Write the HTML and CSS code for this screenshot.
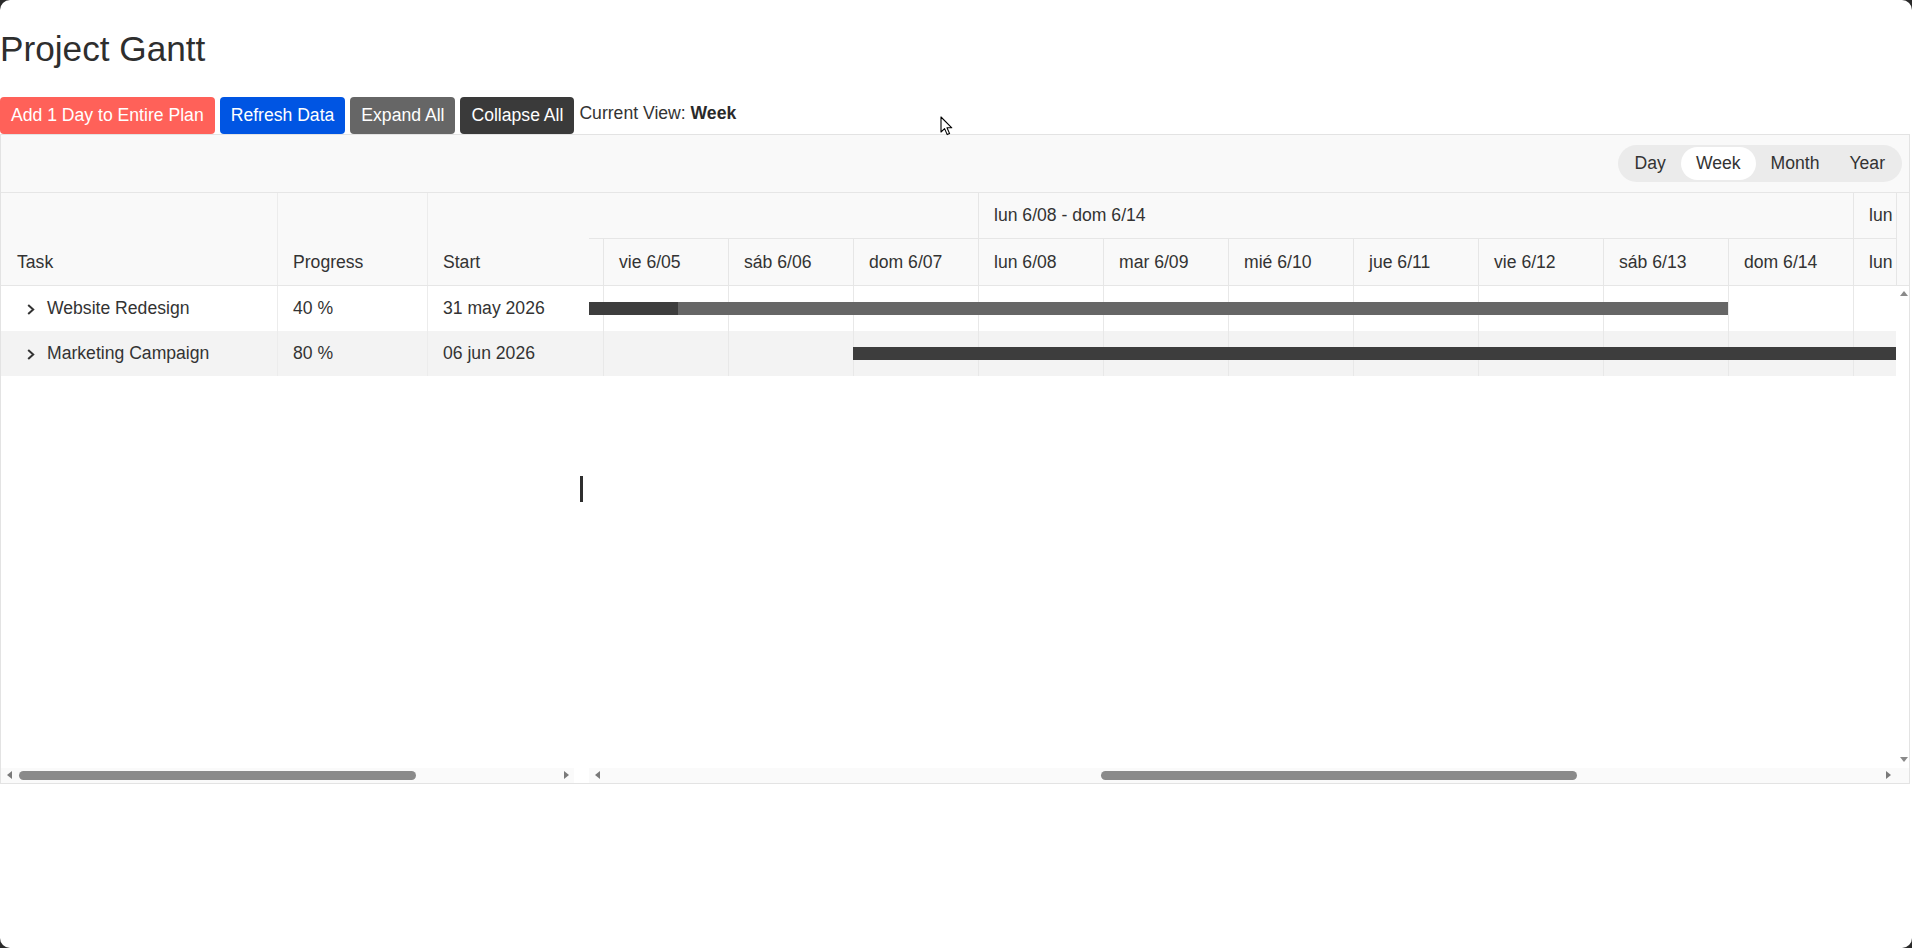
FILE: index.html
```html
<!DOCTYPE html>
<html lang="es">
<head>
<meta charset="utf-8">
<title>Project Gantt</title>
<link rel="stylesheet" href="styles.css">
</head>
<body>
<h1 class="title">Project Gantt</h1>
<div class="actions">
  <button class="btn btn-add">Add 1 Day to Entire Plan</button>
  <button class="btn btn-refresh">Refresh Data</button>
  <button class="btn btn-expand">Expand All</button>
  <button class="btn btn-collapse">Collapse All</button>
  <span class="view-label">Current View: <b>Week</b></span>
</div>

<div class="gantt">
  <div class="gantt-toolbar">
    <div class="segmented">
      <span class="seg">Day</span>
      <span class="seg active">Week</span>
      <span class="seg">Month</span>
      <span class="seg">Year</span>
    </div>
  </div>

  <div class="gantt-main">
    <div class="grid">
      <div class="grid-header">
        <div class="gh-cell col-task"><span>Task</span></div>
        <div class="gh-cell col-progress"><span>Progress</span></div>
        <div class="gh-cell col-start"><span>Start</span></div>
      </div>
      <div class="grid-body">
        <div class="grow">
          <div class="gcell col-task task-cell">
            <svg class="chev" width="8" height="11" viewBox="0 0 8 11"><polyline points="1.2,1 6.2,5.5 1.2,10" fill="none" stroke="#333" stroke-width="2"/></svg>
            <span>Website Redesign</span>
          </div>
          <div class="gcell col-progress">40 %</div>
          <div class="gcell col-start">31 may 2026</div>
        </div>
        <div class="grow alt">
          <div class="gcell col-task task-cell">
            <svg class="chev" width="8" height="11" viewBox="0 0 8 11"><polyline points="1.2,1 6.2,5.5 1.2,10" fill="none" stroke="#333" stroke-width="2"/></svg>
            <span>Marketing Campaign</span>
          </div>
          <div class="gcell col-progress">80 %</div>
          <div class="gcell col-start">06 jun 2026</div>
        </div>
      </div>
      <div class="hscroll grid-scroll">
        <span class="arr arr-left"></span>
        <div class="track"><div class="thumb" style="margin-left:2px;width:397px"></div></div>
        <span class="arr arr-right"></span>
      </div>
    </div>

    <div class="chart">
      <div class="chart-header">
        <div class="ch-viewport">
          <div class="week-row">
            <div class="week week-first"></div>
            <div class="week week-full">lun 6/08 - dom 6/14</div>
            <div class="week week-last">lun</div>
          </div>
          <div class="day-row">
            <div class="day day-first"></div>
            <div class="day">vie 6/05</div>
            <div class="day">sáb 6/06</div>
            <div class="day">dom 6/07</div>
            <div class="day">lun 6/08</div>
            <div class="day">mar 6/09</div>
            <div class="day">mié 6/10</div>
            <div class="day">jue 6/11</div>
            <div class="day">vie 6/12</div>
            <div class="day">sáb 6/13</div>
            <div class="day">dom 6/14</div>
            <div class="day day-last">lun</div>
          </div>
        </div>
        <div class="ch-corner"></div>
      </div>

      <div class="chart-body">
        <div class="cb-viewport">
          <div class="trow">
            <div class="bar" style="left:-611px;width:1750px"><div class="bar-progress" style="width:40%"></div></div>
          </div>
          <div class="trow alt">
            <div class="bar" style="left:264px;width:1750px"><div class="bar-progress" style="width:80%"></div></div>
          </div>
        </div>
        <div class="vscroll">
          <span class="varr"><span class="arr arr-up"></span></span>
          <span class="varr"><span class="arr arr-down"></span></span>
        </div>
      </div>

      <div class="hscroll chart-scroll">
        <span class="arr arr-left"></span>
        <div class="track"><div class="thumb" style="margin-left:496px;width:476px"></div></div>
        <span class="arr arr-right"></span>
        <span class="corner"></span>
      </div>
    </div>
  </div>
</div>

<span class="ibeam"></span>
<svg class="pointer" width="14" height="20" viewBox="0 0 14 20"><path d="M1 1 L1 16 L4.6 12.6 L7.2 18.6 L9.6 17.6 L7 11.8 L11.8 11.8 Z" fill="#fff" stroke="#000" stroke-width="1.1" stroke-linejoin="round"/></svg>
</body>
</html>
```

FILE: styles.css
```css
* {
  box-sizing: border-box;
}

html {
  background: #2a2a2a;
}

body {
  margin: 0;
  width: 1912px;
  height: 948px;
  background: #fff;
  border-radius: 10px;
  overflow: hidden;
  position: relative;
  font-family: "Liberation Sans", Arial, sans-serif;
  font-size: 17.6px;
  color: #333;
}

.title {
  margin: 28.5px 0 27.5px;
  font-size: 35.2px;
  font-weight: normal;
  line-height: 40.5px;
  color: #2e2e2e;
}

.actions {
  display: flex;
  align-items: center;
  gap: 5px;
  height: 37px;
}

.btn {
  height: 37px;
  padding: 0 11px;
  border: 0;
  border-radius: 4px;
  color: #fff;
  font-family: inherit;
  font-size: 17.6px;
  cursor: pointer;
}

.btn-add { background: #ff6159; }
.btn-refresh { background: #0055e3; }
.btn-expand { background: #666666; }
.btn-collapse { background: #3a3a3a; }

.view-label {
  padding-bottom: 3px;
  color: #333;
}

.view-label b {
  color: #2a2a2a;
}

/* Gantt */
.gantt {
  width: 1910px;
  height: 650px;
  border: 1px solid #e3e3e3;
  display: flex;
  flex-direction: column;
}

.gantt-toolbar {
  height: 58px;
  flex: none;
  background: #f9f9f9;
  border-bottom: 1px solid #e6e6e6;
  display: flex;
  justify-content: flex-end;
  align-items: center;
  padding-right: 7px;
}

.segmented {
  display: flex;
  height: 37px;
  padding: 2px;
  background: #ebebeb;
  border-radius: 19px;
}

.seg {
  padding: 0 15px;
  line-height: 33px;
  border-radius: 17px;
  color: #333;
}

.seg.active {
  background: #fff;
}

.gantt-main {
  flex: 1;
  display: flex;
  min-height: 0;
}

/* Grid */
.grid {
  width: 588px;
  flex: none;
  display: flex;
  flex-direction: column;
}

.grid-header {
  height: 93px;
  flex: none;
  display: flex;
  background: #f9f9f9;
  border-bottom: 1px solid #e6e6e6;
}

.gh-cell {
  display: flex;
  align-items: flex-end;
  padding-left: 15px;
  line-height: 46px;
  border-right: 1px solid #ececec;
}

.col-task {
  width: 277px;
  flex: none;
}

.col-progress {
  width: 150px;
  flex: none;
}

.col-start {
  flex: 1;
}

.gh-cell.col-task {
  padding-left: 16px;
}

.gh-cell.col-start {
  border-right: 0;
}

.grid-body {
  flex: 1;
}

.grow {
  height: 45px;
  display: flex;
  background: #fff;
}

.grow.alt {
  background: #f3f3f3;
}

.gcell {
  display: flex;
  align-items: center;
  padding-left: 15px;
  border-right: 1px solid #ececec;
}

.gcell.col-start {
  border-right: 0;
}

.task-cell {
  padding-left: 26px;
  gap: 12px;
}

.chev {
  flex: none;
  margin-top: 2px;
}

/* Scrollbars */
.hscroll {
  height: 15px;
  flex: none;
  display: flex;
  align-items: center;
  background: #fafafa;
}

.grid-scroll {
  margin-right: 15px;
}

.track {
  flex: 1;
  display: flex;
  align-items: center;
  height: 100%;
}

.thumb {
  height: 9px;
  border-radius: 5px;
  background: #8a8a8a;
  flex: none;
}

.arr {
  width: 16px;
  height: 15px;
  flex: none;
  display: flex;
  align-items: center;
  justify-content: center;
}

.arr::before {
  content: "";
  width: 0;
  height: 0;
}

.arr-left::before {
  border-top: 4px solid transparent;
  border-bottom: 4px solid transparent;
  border-right: 5px solid #7a7a7a;
}

.arr-right::before {
  border-top: 4px solid transparent;
  border-bottom: 4px solid transparent;
  border-left: 5px solid #7a7a7a;
}

.arr-up::before {
  border-left: 4px solid transparent;
  border-right: 4px solid transparent;
  border-bottom: 5px solid #8a8a8a;
}

.arr-down::before {
  border-left: 4px solid transparent;
  border-right: 4px solid transparent;
  border-top: 5px solid #8a8a8a;
}

.corner {
  width: 13px;
  flex: none;
}

/* Chart */
.chart {
  flex: 1;
  min-width: 0;
  display: flex;
  flex-direction: column;
}

.chart-header {
  height: 93px;
  flex: none;
  display: flex;
  background: #f9f9f9;
  border-bottom: 1px solid #e6e6e6;
}

.ch-viewport {
  width: 1308px;
  flex: none;
  overflow: hidden;
  border-right: 1px solid #e6e6e6;
}

.ch-corner {
  flex: 1;
}

.week-row {
  display: flex;
  height: 46px;
  border-bottom: 1px solid #e6e6e6;
}

.week {
  flex: none;
  border-left: 1px solid #e6e6e6;
  padding-left: 15px;
  line-height: 45px;
  white-space: nowrap;
}

.week-first {
  width: 389px;
  border-left: 0;
}

.week-full {
  width: 875px;
}

.week-last {
  width: 43px;
}

.day-row {
  display: flex;
  height: 46px;
}

.day {
  width: 125px;
  flex: none;
  border-left: 1px solid #e6e6e6;
  padding-left: 15px;
  line-height: 46px;
  white-space: nowrap;
}

.day-first {
  width: 14px;
  border-left: 0;
  padding-left: 0;
}

.day-last {
  width: 43px;
}

.chart-body {
  flex: 1;
  min-height: 0;
  display: flex;
}

.cb-viewport {
  width: 1307px;
  flex: none;
  overflow: hidden;
}

.trow {
  height: 45px;
  position: relative;
  background-color: #fff;
  background-image: linear-gradient(to right, #e8e8e8 1px, transparent 1px);
  background-size: 125px 100%;
  background-position: 14px 0;
}

.trow.alt {
  background-color: #f3f3f3;
}

.bar {
  position: absolute;
  top: 16px;
  height: 13px;
  background: #666666;
}

.bar-progress {
  height: 100%;
  background: #3d3d3d;
}

.vscroll {
  flex: 1;
  display: flex;
  flex-direction: column;
  justify-content: space-between;
  align-items: center;
  padding-left: 2px;
}

.varr {
  height: 16px;
  display: flex;
  align-items: center;
}

.varr .arr {
  width: 10px;
  height: 10px;
}

/* Cursor overlays */
.ibeam {
  position: absolute;
  left: 580px;
  top: 476px;
  width: 3px;
  height: 26px;
  background: #2e2e2e;
}

.pointer {
  position: absolute;
  left: 940px;
  top: 116px;
}
```
